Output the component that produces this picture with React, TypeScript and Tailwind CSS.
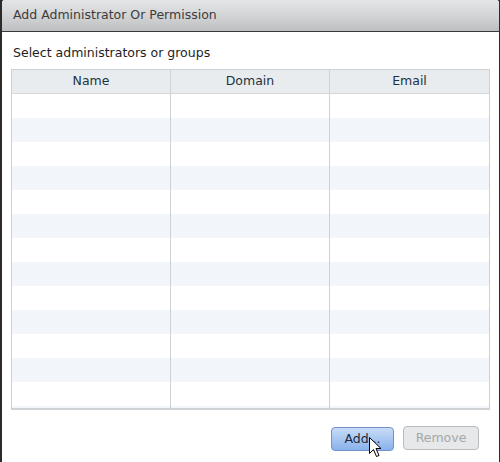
import React from 'react';

const rows = Array.from({ length: 13 }, (_, i) => i);

const App: React.FC = () => {
  return (
    <div className="w-[500px] h-[462px] bg-[#2b2b2b] overflow-hidden" style={{ fontFamily: '"DejaVu Sans", Verdana, sans-serif' }}>
      <div className="ml-[2px] mr-[1px] w-[497px] h-[462px] flex flex-col bg-white rounded-tl-[3px] rounded-tr-[3px] overflow-hidden">
        {/* title bar */}
        <div className="h-[32px] shrink-0 flex items-center pl-[11px] bg-gradient-to-b from-[#e4e5e7] via-[#d3d4d6] to-[#bebfc1] border-b border-[#3a3a3a] text-[12.5px] text-[#3c3c3c]">
          Add Administrator Or Permission
        </div>

        <div className="flex-1 flex flex-col px-[9px]">
          <div className="pt-[12px] pl-[2px] h-[37px] text-[12.5px] text-[#1e1e1e]">Select administrators or groups</div>

          {/* grid */}
          <div className="w-[479px] border border-[#cfd2d5] border-b-2">
            <div className="grid grid-cols-[159px_159px_1fr] h-[24px] bg-[#e8ecef] border-b border-[#d5d8db] text-[12.5px] text-[#1d3340]">
              <div className="flex items-center justify-center border-r border-[#d0d3d6]">Name</div>
              <div className="flex items-center justify-center border-r border-[#d0d3d6]">Domain</div>
              <div className="flex items-center justify-center">Email</div>
            </div>
            <div className="relative">
              {rows.map((i) => (
                <div key={i} className={`h-[24px] ${i % 2 === 1 ? 'bg-[#f2f5f9]' : 'bg-white'}`} />
              ))}
              <div className="h-[2px] bg-[#f2f5f9]" />
              <div className="absolute inset-0 grid grid-cols-[159px_159px_1fr] pointer-events-none">
                <div className="border-r border-[#cfd2d5]" />
                <div className="border-r border-[#cfd2d5]" />
                <div />
              </div>
            </div>
          </div>

          {/* buttons */}
          <div className="flex justify-end gap-[9px] pr-[11px] mt-[16px]">
            <div className="relative">
              <button className="w-[63px] h-[24px] rounded-[4px] border border-[#6f93c6] bg-gradient-to-b from-[#c9dcf6] to-[#89b1ec] text-[12.5px] text-[#1d2a3a]">
                Add...
              </button>
              <svg className="absolute left-[38px] top-[11px]" width="13" height="21" viewBox="0 0 13 21">
                <path d="M0.5 0.5 L0.5 16.5 L4.5 12.5 L7.5 19.5 L10 18.5 L7 11.5 L12 11.5 Z" fill="#fff" stroke="#000" strokeWidth="1" strokeLinejoin="miter" />
              </svg>
            </div>
            <button className="w-[76px] h-[24px] rounded-[4px] border border-[#b9bcbf] bg-[#e6e8e9] text-[12.5px] text-[#a4a7aa]">
              Remove
            </button>
          </div>
        </div>
      </div>
    </div>
  );
};

export default App;
